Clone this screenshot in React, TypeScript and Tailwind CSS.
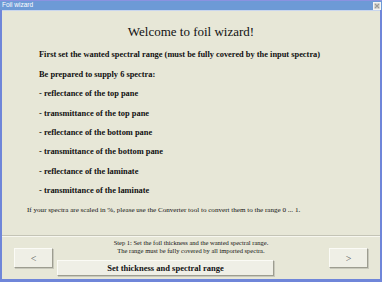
import React from "react";

const serif = { fontFamily: '"Liberation Serif", "Times New Roman", serif' };

function Btn({ className, children }: { className: string; children?: React.ReactNode }) {
  return (
    <div
      className={
        "flex items-center justify-center bg-[#efefe6] border border-t-[#fbfbf6] border-l-[#fbfbf6] border-r-[#9d9d90] border-b-[#9d9d90] shadow-[1px_1px_0_#c8c8bc] " +
        className
      }
    >
      {children}
    </div>
  );
}

export default function App() {
  const items = [
    "First set the wanted spectral range (must be fully covered by the input spectra)",
    "Be prepared to supply 6 spectra:",
    "- reflectance of the top pane",
    "- transmittance of the top pane",
    "- reflectance of the bottom pane",
    "- transmittance of the bottom pane",
    "- reflectance of the laminate",
    "- transmittance of the laminate",
  ];
  return (
    <div className="w-[382px] h-[282px] bg-[#6f86d9] flex flex-col overflow-hidden" style={serif}>
      <div className="h-[10px] bg-[#6d9ad6] border-t border-t-[#8b92e0] flex items-center justify-between pl-[2px] pr-[1px]">
        <span
          className="text-[6.5px] leading-none text-white"
          style={{ fontFamily: '"Liberation Sans", Arial, sans-serif' }}
        >
          Foil wizard
        </span>
        <div className="w-[8px] h-[8px] bg-[#dcdcd6] border border-[#f4f4f4] flex items-center justify-center">
          <svg width="6" height="6" viewBox="0 0 6 6">
            <path d="M1 1L5 5M5 1L1 5" stroke="#9a9a9a" strokeWidth="1.2" />
          </svg>
        </div>
      </div>
      <div className="flex-1 mx-[2px] mb-[3px] bg-[#e7e7d7] border-t border-t-[#c9d6ee] flex flex-col">
        <div className="h-[224px] pt-[13px] text-[#111]">
          <div className="text-center text-[13px] leading-[16px]">Welcome to foil wizard!</div>
          <div className="mt-[5.3px] pl-[37px]">
            {items.map((t) => (
              <div key={t} className="text-[8.4px] leading-[19.4px] font-bold whitespace-nowrap">
                {t}
              </div>
            ))}
            <div className="-ml-[12px] text-[7.1px] leading-[19.4px] whitespace-nowrap">
              If your spectra are scaled in %, please use the Converter tool to convert them to the range 0 ... 1.
            </div>
          </div>
        </div>
        <div className="border-t border-t-[#c4c4b6] border-b border-b-[#f7f7ef]" />
        <div className="flex-1 flex items-start px-[12px]">
          <Btn className="mt-[11px] w-[39px] h-[20px]">
            <span className="text-[10px] text-[#555]">&lt;</span>
          </Btn>
          <div className="flex-1 flex flex-col pt-[2px]">
            <div className="text-center text-[6.5px] leading-[8px] text-[#111]">
              Step 1: Set the foil thickness and the wanted spectral range.
              <br />
              The range must be fully covered by all imported spectra.
            </div>
            <Btn className="mt-[5px] ml-[4px] w-[217px] h-[16px]">
              <span className="text-[8.5px] font-bold text-[#111]">Set thickness and spectral range</span>
            </Btn>
          </div>
          <Btn className="mt-[11px] w-[39px] h-[20px]">
            <span className="text-[10px] text-[#555]">&gt;</span>
          </Btn>
        </div>
      </div>
    </div>
  );
}
